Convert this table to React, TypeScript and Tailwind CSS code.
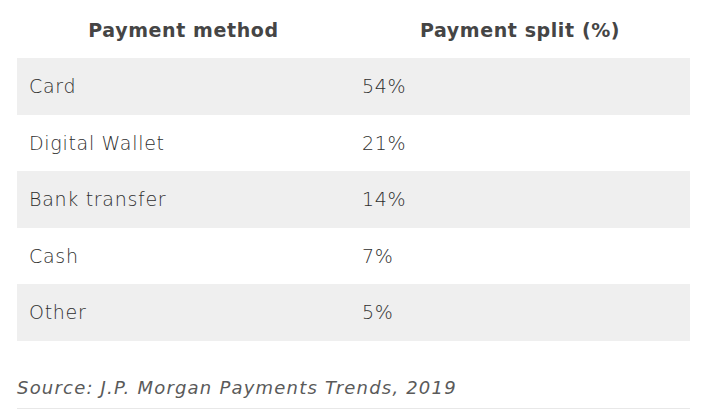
import React from "react";

const rows = [
  ["Card", "54%"],
  ["Digital Wallet", "21%"],
  ["Bank transfer", "14%"],
  ["Cash", "7%"],
  ["Other", "5%"],
];

export default function App() {
  return (
    <div className="w-[724px] h-[411px] bg-white overflow-hidden font-['DejaVu_Sans',sans-serif]">
      <div className="ml-[17px] w-[673px]">
        <div className="flex h-[58px] items-center pt-[2px] text-[19px] font-semibold tracking-[0.6px] text-[#454545]">
          <div className="w-[333px] text-center">Payment method</div>
          <div className="w-[340px] text-center">Payment split (%)</div>
        </div>
        {rows.map(([a, b], i) => (
          <div
            key={a}
            className={`flex h-[56.6px] items-center text-[19px] font-extralight tracking-[0.7px] text-[#2e2e2e] ${i % 2 === 0 ? "bg-[#efefef]" : "bg-white"}`}
          >
            <div className="w-[333px] pl-[12px]">{a}</div>
            <div className="w-[340px] pl-[12px]">{b}</div>
          </div>
        ))}
        <div className="mt-[33px] pb-[7px] border-b border-[#e8e8e8] text-[18px] italic font-extralight tracking-[1.2px] text-[#5a5a5a]">
          Source: J.P. Morgan Payments Trends, 2019
        </div>
      </div>
    </div>
  );
}
